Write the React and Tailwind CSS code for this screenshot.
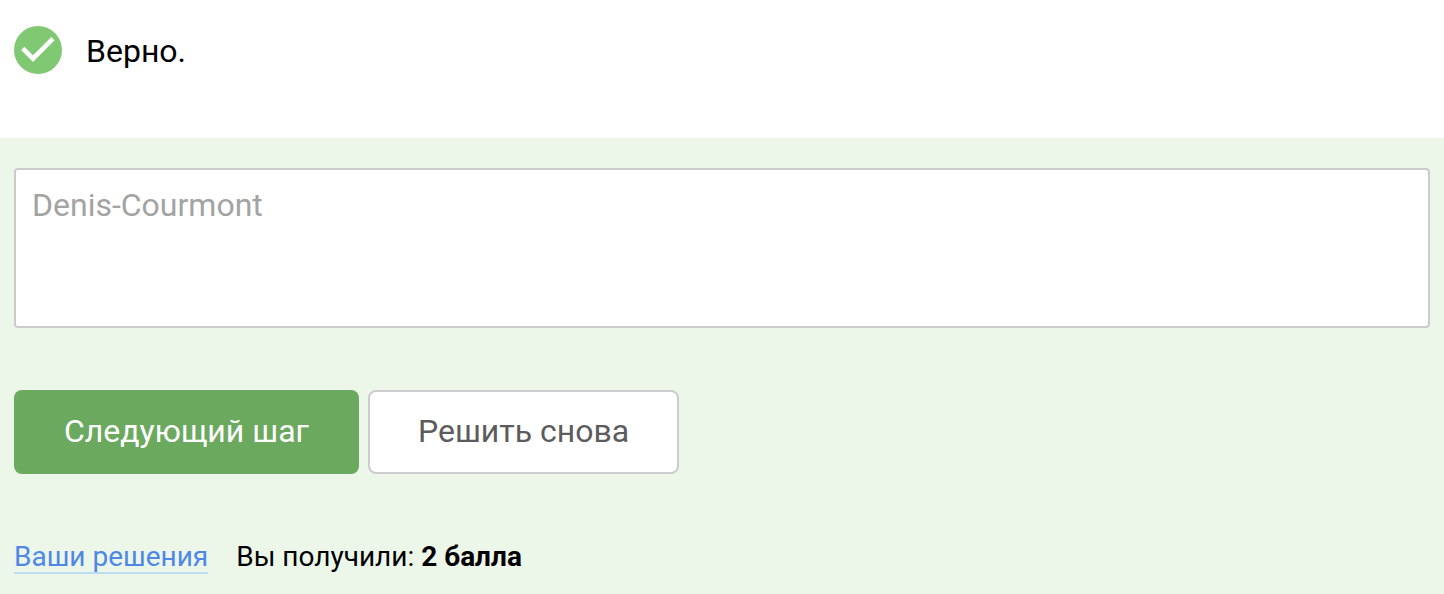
export default function App() {
  return (
    <main className="min-h-screen bg-[#ecf7ea] font-['Roboto',sans-serif] text-black">
      <div role="status" className="flex items-start gap-6 bg-white px-3.5 pt-[26px] pb-[62px]">
        <svg className="size-12 shrink-0" viewBox="0 0 48 48" aria-hidden="true">
          <circle cx="24" cy="24" r="24" fill="#80c972" />
          <path d="M7.1 24.1 10.4 20.8 19 29.3 37.3 10.9 40.6 14.2 19 36z" fill="#fff" />
        </svg>
        <p className="text-[32px] leading-[50px]">Верно.</p>
      </div>
      <form className="px-3.5 pt-[30px]" onSubmit={(e) => e.preventDefault()}>
        <textarea
          aria-label="Ответ"
          disabled
          defaultValue="Denis-Courmont"
          className="block h-40 w-full resize-none rounded-sm border-2 border-[#ccc] bg-white px-4 py-3 text-[32px] leading-[46px] text-[#a3a3a3]"
        />
        <div className="mt-[62px] flex flex-wrap gap-[9px]">
          <button type="submit" className="h-[84px] rounded-lg bg-[#6ba95f] px-[50px] pb-0.5 text-[32px] text-white">
            Следующий шаг
          </button>
          <button type="button" className="h-[84px] rounded-lg border-2 border-[#ccc] bg-white px-12 pb-0.5 text-[32px] text-[#5c5c5c]">
            Решить снова
          </button>
        </div>
        <div className="mt-[68px] flex flex-wrap items-start gap-7 text-[28px] leading-[30px]">
          <a href="#solutions" className="border-b-2 border-[#bcdcf2] text-[#4e87e6]">
            Ваши решения
          </a>
          <p>
            Вы получили: <strong className="font-bold">2 балла</strong>
          </p>
        </div>
      </form>
    </main>
  );
}
